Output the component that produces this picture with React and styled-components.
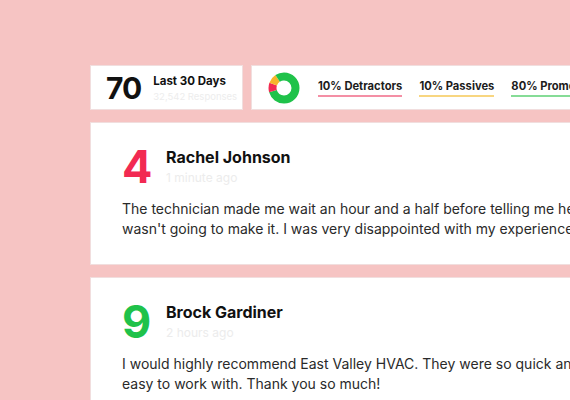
import React from 'react';
import styled, { createGlobalStyle } from 'styled-components';

const GlobalStyle = createGlobalStyle`
  html, body {
    margin: 0;
    padding: 0;
    background: #f6c4c3;
    overflow: hidden;
  }
  body {
    font-family: Inter, "Noto Sans", sans-serif;
    color: #1c1c1c;
  }
`;

const Page = styled.div`
  width: 640px;
  padding: 65px 0 0 90px;
  display: flex;
  flex-direction: column;
  gap: 12px;
`;

const StatsRow = styled.div`
  display: flex;
  gap: 8px;
`;

const Card = styled.div`
  background: #fff;
  border: 1px solid #f1dede;
  box-sizing: border-box;
`;

const TotalCard = styled(Card)`
  width: 153px;
  height: 45px;
  display: flex;
  align-items: center;
  padding-left: 15px;
  gap: 12px;
`;

const BigNumber = styled.div`
  font-size: 30px;
  font-weight: 700;
  letter-spacing: -1px;
  line-height: 1;
  color: #111;
`;

const TotalText = styled.div`
  display: flex;
  flex-direction: column;
  gap: 3px;
  margin-top: 1px;
`;

const TotalTitle = styled.div`
  font-size: 11.5px;
  font-weight: 700;
  line-height: 14px;
  color: #111;
`;

const TotalSub = styled.div`
  font-size: 9.5px;
  line-height: 12px;
  color: #ededed;
`;

const BreakdownCard = styled(Card)`
  flex: 1;
  height: 45px;
  display: flex;
  align-items: center;
  padding-left: 16px;
`;

const Donut = styled.svg`
  width: 32px;
  height: 32px;
  margin-right: 18px;
  flex-shrink: 0;
`;

const Labels = styled.div`
  display: flex;
  gap: 17px;
  white-space: nowrap;
`;

const Label = styled.span`
  font-size: 11.2px;
  font-weight: 700;
  color: #1c1c1c;
  line-height: 14px;
  padding-bottom: 2px;
  border-bottom: 2px solid ${p => p.$line};
`;

const ReviewCard = styled(Card)`
  padding: 21px 0 25px 31px;
`;

const Header = styled.div`
  display: flex;
  align-items: flex-start;
  gap: 18px;
`;

const Score = styled.div`
  font-size: 45px;
  font-weight: 700;
  line-height: 45px;
  width: 26px;
  color: ${p => p.$color};
`;

const Who = styled.div`
  display: flex;
  flex-direction: column;
  gap: 3px;
  margin-top: 3px;
`;

const Name = styled.div`
  font-size: 16px;
  font-weight: 700;
  line-height: 20px;
  color: #111;
`;

const When = styled.div`
  font-size: 12px;
  line-height: 16px;
  color: #ececec;
`;

const Body = styled.p`
  margin: 10px 0 0;
  width: 460px;
  font-size: 14px;
  line-height: 20px;
  color: #2a2a2a;
`;

const ring = 2 * Math.PI * 11.5;

const segments = [
  { color: '#1fc24a', from: 0, size: 0.7 },
  { color: '#f22a52', from: 0.7, size: 0.1 },
  { color: '#f7b52b', from: 0.8, size: 0.1 },
  { color: '#1fc24a', from: 0.9, size: 0.1 },
];

const reviews = [
  {
    score: 4,
    color: '#f22a52',
    name: 'Rachel Johnson',
    when: '1 minute ago',
    text: "The technician made me wait an hour and a half before telling me he wasn't going to make it. I was very disappointed with my experience.",
  },
  {
    score: 9,
    color: '#1fc24a',
    name: 'Brock Gardiner',
    when: '2 hours ago',
    text: 'I would highly recommend East Valley HVAC. They were so quick and easy to work with. Thank you so much!',
  },
];

const App = () => (
  <>
    <GlobalStyle />
    <Page>
      <StatsRow>
        <TotalCard>
          <BigNumber>70</BigNumber>
          <TotalText>
            <TotalTitle>Last 30 Days</TotalTitle>
            <TotalSub>32,542 Responses</TotalSub>
          </TotalText>
        </TotalCard>
        <BreakdownCard>
          <Donut viewBox="0 0 32 32">
            {segments.map((s, i) => (
              <circle
                key={i}
                cx="16"
                cy="16"
                r="11.5"
                fill="none"
                stroke={s.color}
                strokeWidth="8"
                strokeDasharray={`${s.size * ring} ${ring}`}
                strokeDashoffset={-s.from * ring}
                transform="rotate(-90 16 16)"
              />
            ))}
          </Donut>
          <Labels>
            <Label $line="#f48fa5">10% Detractors</Label>
            <Label $line="#f8d681">10% Passives</Label>
            <Label $line="#86dc97">80% Promoters</Label>
          </Labels>
        </BreakdownCard>
      </StatsRow>
      {reviews.map(r => (
        <ReviewCard key={r.name}>
          <Header>
            <Score $color={r.color}>{r.score}</Score>
            <Who>
              <Name>{r.name}</Name>
              <When>{r.when}</When>
            </Who>
          </Header>
          <Body>{r.text}</Body>
        </ReviewCard>
      ))}
    </Page>
  </>
);

export default App;
